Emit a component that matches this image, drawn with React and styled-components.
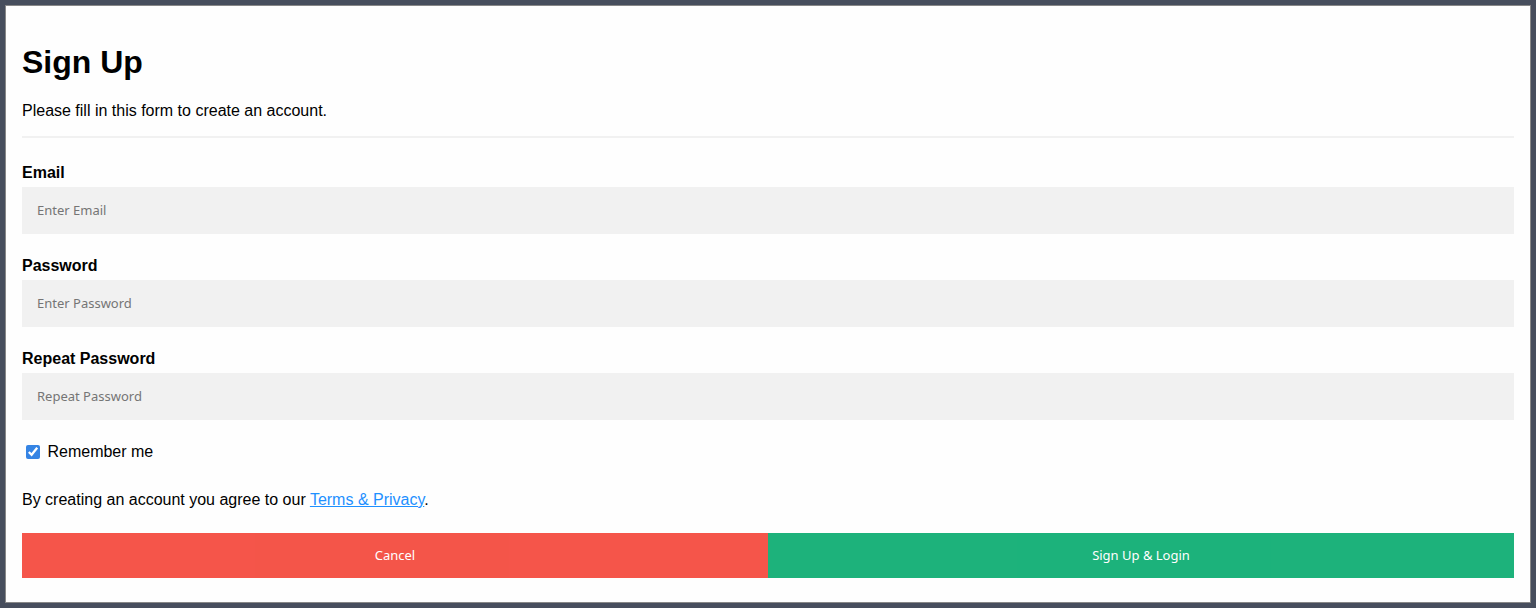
import React from "react";
import styled, { createGlobalStyle } from "styled-components";

const Global = createGlobalStyle`
  body {
    margin: 0;
    padding: 5px;
    background: #474e5d;
    font-family: "Liberation Sans", Arial, sans-serif;
  }
  * {
    box-sizing: border-box;
  }
`;

const Card = styled.div`
  background: #fefefe;
  border: 1px solid #888;
`;

const Container = styled.form`
  padding: 16px;
  display: flow-root;
`;

const Title = styled.h1`
  font-size: 32px;
  margin: 22px 0 21px;
`;

const Text = styled.p`
  font-size: 16px;
  margin: 16px 0;
`;

const Divider = styled.hr`
  border: 1px solid #f1f1f1;
  margin: 8px 0 25px;
`;

const Label = styled.label`
  display: block;
  font-weight: bold;
  font-size: 16px;
  line-height: 19px;
`;

const Input = styled.input`
  display: block;
  width: 100%;
  padding: 15px;
  margin: 5px 0 22px;
  border: none;
  background: #f1f1f1;
  outline: none;
  font-family: "Noto Sans", sans-serif;
  font-size: 13px;
  line-height: 17px;
`;

const Remember = styled.label`
  display: block;
  font-size: 16px;
  padding-bottom: 1px;
  input {
    width: 14px;
    height: 14px;
    margin: 3px 3px 15px 4px;
    vertical-align: -2px;
    accent-color: #3584e4;
  }
`;

const Link = styled.a`
  color: dodgerblue;
`;

const Actions = styled.div`
  display: flex;
  padding: 8px 0;
`;

const Button = styled.button`
  flex: 1;
  padding: 14px 20px 14px;
  border: none;
  color: white;
  cursor: pointer;
  opacity: 0.9;
  font-family: "Noto Sans", sans-serif;
  font-size: 13px;
  line-height: 17px;
  background: ${(p) => (p.$cancel ? "#f44336" : "#04AA6D")};
`;

const fields = [
  { label: "Email", type: "text", placeholder: "Enter Email" },
  { label: "Password", type: "password", placeholder: "Enter Password" },
  { label: "Repeat Password", type: "password", placeholder: "Repeat Password" },
];

export default function App() {
  return (
    <>
      <Global />
      <Card>
        <Container onSubmit={(e) => e.preventDefault()}>
          <Title>Sign Up</Title>
          <Text>Please fill in this form to create an account.</Text>
          <Divider />
          {fields.map((f) => (
            <div key={f.label}>
              <Label>{f.label}</Label>
              <Input type={f.type} placeholder={f.placeholder} />
            </div>
          ))}
          <Remember>
            <input type="checkbox" defaultChecked /> Remember me
          </Remember>
          <Text>
            By creating an account you agree to our <Link href="#">Terms &amp; Privacy</Link>.
          </Text>
          <Actions>
            <Button type="button" $cancel>
              Cancel
            </Button>
            <Button type="submit">Sign Up &amp; Login</Button>
          </Actions>
        </Container>
      </Card>
    </>
  );
}
